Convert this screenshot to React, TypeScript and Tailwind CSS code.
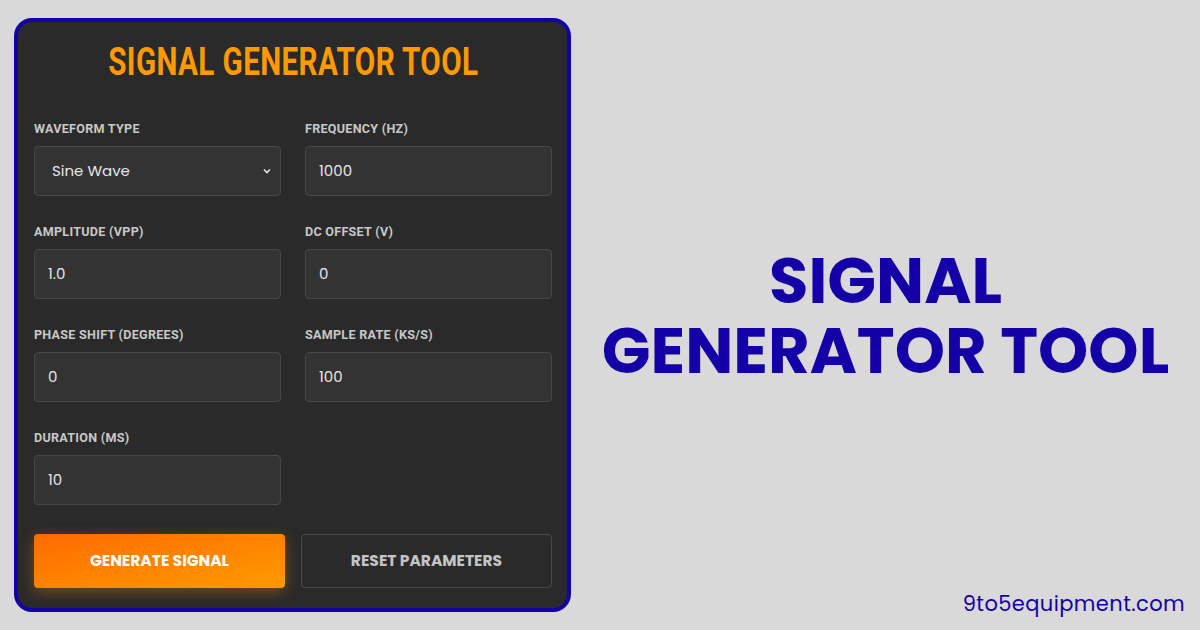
import React from 'react';

const fields = [
    { label: 'Amplitude (Vpp)', value: '1.0' },
    { label: 'DC Offset (V)', value: '0' },
    { label: 'Phase Shift (Degrees)', value: '0' },
    { label: 'Sample Rate (kS/s)', value: '100' },
    { label: 'Duration (ms)', value: '10' },
];

const Label: React.FC<{ text: string }> = ({ text }) => (
    <div className="h-4 mb-[11px] leading-4">
        <span className="inline-block origin-left scale-x-[0.93] whitespace-nowrap text-[13.5px] font-bold uppercase tracking-[0.3px] text-[#c8c8c8] font-['Roboto',sans-serif]">
            {text}
        </span>
    </div>
);

const Box: React.FC<{ children: React.ReactNode }> = ({ children }) => (
    <div className="h-[50px] flex items-center justify-between px-[13px] bg-[#333333] border border-[#474747] rounded-[4px] text-[15px] text-[#e6e6e6] font-['Poppins','Inter',sans-serif]">
        {children}
    </div>
);

export default function App() {
    return (
        <div className="w-[1200px] h-[630px] bg-[#d9d9d9] relative flex font-['Inter',sans-serif]">
            <div className="ml-[14px] mt-[18px] w-[557px] h-[594px] border-4 border-[#1500a8] rounded-[18px] bg-[#2a2a2a] pl-4 pr-[15px] pt-[18px]">
                <div className="h-[44px] flex justify-center">
                    <h1 className="inline-block scale-x-[0.78] whitespace-nowrap text-[38px] leading-[44px] font-bold text-[#ff9900] tracking-[0.5px] font-['Roboto',sans-serif]">
                        SIGNAL GENERATOR TOOL
                    </h1>
                </div>

                <div className="mt-[35px] grid grid-cols-2 gap-x-6 gap-y-[26px]">
                    <div>
                        <Label text="Waveform Type" />
                        <Box>
                            <span className="ml-[4px]">Sine Wave</span>
                            <svg width="10" height="10" viewBox="0 0 10 10" className="mr-[-5px]">
                                <path d="M2 3.5 L5 6.5 L8 3.5" fill="none" stroke="#e6e6e6" strokeWidth="1.6" />
                            </svg>
                        </Box>
                    </div>
                    <div>
                        <Label text="Frequency (Hz)" />
                        <Box>
                            <span>1000</span>
                        </Box>
                    </div>
                    {fields.map((f) => (
                        <div key={f.label}>
                            <Label text={f.label} />
                            <Box>
                                <span>{f.value}</span>
                            </Box>
                        </div>
                    ))}
                </div>

                <div className="mt-[29px] grid grid-cols-2 gap-4">
                    <button className="h-[54px] rounded-[4px] bg-gradient-to-br from-[#ff6a00] to-[#ff9a00] text-white text-[15.5px] font-bold uppercase shadow-[0_4px_14px_rgba(255,140,0,0.35)] font-['Poppins','Inter',sans-serif]">
                        Generate Signal
                    </button>
                    <button className="h-[54px] rounded-[4px] border border-[#484848] bg-transparent text-[#c4c4c4] text-[15.5px] font-bold uppercase font-['Poppins','Inter',sans-serif]">
                        Reset Parameters
                    </button>
                </div>
            </div>

            <div className="flex-1 flex items-center justify-center pt-[2px]">
                <h2 className="text-center text-[64px] leading-[70px] font-bold text-[#1500a8] font-['Poppins','Noto_Sans',sans-serif]">
                    SIGNAL
                    <br />
                    GENERATOR TOOL
                </h2>
            </div>

            <div className="absolute right-[15px] bottom-[11px] text-[21px] tracking-[0.4px] text-[#1500a8] font-['Poppins','Noto_Sans',sans-serif]">
                9to5equipment.com
            </div>
        </div>
    );
}
